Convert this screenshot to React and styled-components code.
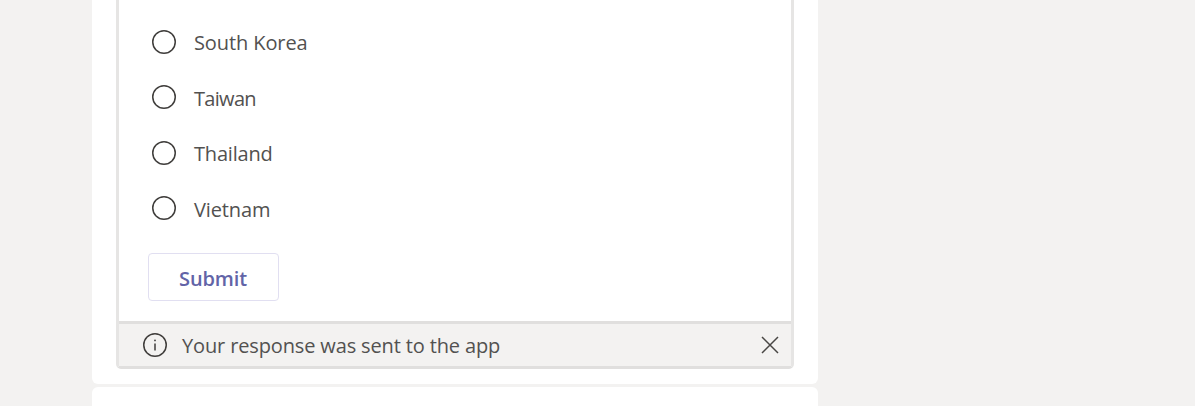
import React from "react";
import styled, { createGlobalStyle } from "styled-components";

const GlobalStyle = createGlobalStyle`
  html, body {
    margin: 0;
    height: 406px;
    overflow: hidden;
    background: #f3f2f1;
  }
`;

const Page = styled.div`
  width: 1195px;
  height: 406px;
  overflow: hidden;
  padding-left: 92px;
  box-sizing: border-box;
  font-family: "Open Sans", "Noto Sans", sans-serif;
`;

const Message = styled.div`
  width: 726px;
  height: 384px;
  box-sizing: border-box;
  padding: 0 24px;
  background: #fff;
  border-radius: 0 0 6px 6px;
`;

const NextMessage = styled.div`
  width: 726px;
  height: 19px;
  margin-top: 3px;
  background: #fff;
  border-radius: 6px 6px 0 0;
`;

const Card = styled.div`
  height: 369px;
  box-sizing: border-box;
  display: flex;
  flex-direction: column;
  border: 3px solid #e6e5e4;
  border-top: 0;
  border-bottom-color: #e0dfde;
  border-radius: 0 0 5px 5px;
`;

const Options = styled.div`
  flex: 1;
  padding: 14px 0 0 33px;
`;

const Option = styled.label`
  display: flex;
  align-items: center;
  height: 55.5px;
  gap: 18px;
  color: #525150;
  font-size: 20px;
`;

const OptionName = styled.span`
  padding-top: 2px;
  letter-spacing: ${(props) => props.$spacing}px;
`;

const SubmitButton = styled.button`
  display: block;
  width: 131px;
  height: 48px;
  margin-top: 17px;
  margin-left: -4px;
  padding: 2px 1px 0 0;
  background: #fff;
  border: 1px solid #e1dff1;
  border-radius: 4px;
  color: #6264a7;
  font-family: inherit;
  font-size: 20px;
  font-weight: 600;
  letter-spacing: -0.15px;
`;

const Banner = styled.div`
  height: 45px;
  box-sizing: border-box;
  display: flex;
  align-items: center;
  padding: 0 12px 0 24px;
  background: #f3f2f1;
  border-top: 3px solid #e0dfde;
  color: #525150;
  font-size: 20px;
  letter-spacing: -0.14px;
`;

const BannerText = styled.span`
  flex: 1;
  margin-left: 15px;
`;

const CloseButton = styled.button`
  display: flex;
  padding: 0;
  background: none;
  border: 0;
`;

const options = [
  { name: "South Korea", spacing: -0.1 },
  { name: "Taiwan", spacing: -0.7 },
  { name: "Thailand", spacing: -0.2 },
  { name: "Vietnam", spacing: -0.12 },
];

const RadioIcon = () => (
  <svg width="24" height="24" viewBox="0 0 24 24" fill="none" stroke="#3f3d3b" strokeWidth="1.5">
    <circle cx="12" cy="12" r="11.25" />
  </svg>
);

export default function App() {
  return (
    <Page>
      <GlobalStyle />
      <Message>
        <Card>
          <Options>
            {options.map((option) => (
              <Option key={option.name}>
                <RadioIcon />
                <OptionName $spacing={option.spacing}>{option.name}</OptionName>
              </Option>
            ))}
            <SubmitButton>Submit</SubmitButton>
          </Options>
          <Banner>
            <svg width="24" height="24" viewBox="0 0 24 24" fill="none" stroke="#3f3d3b" strokeWidth="1.5">
              <circle cx="12" cy="12" r="11.25" />
              <path d="M12 10.5V17.5" />
              <circle cx="12" cy="7.4" r="0.9" fill="#3f3d3b" stroke="none" />
            </svg>
            <BannerText>Your response was sent to the app</BannerText>
            <CloseButton aria-label="Close">
              <svg width="18" height="18" viewBox="0 0 18 18" fill="none" stroke="#484644" strokeWidth="1.5">
                <path d="M1 1L17 17M17 1L1 17" />
              </svg>
            </CloseButton>
          </Banner>
        </Card>
      </Message>
      <NextMessage />
    </Page>
  );
}
